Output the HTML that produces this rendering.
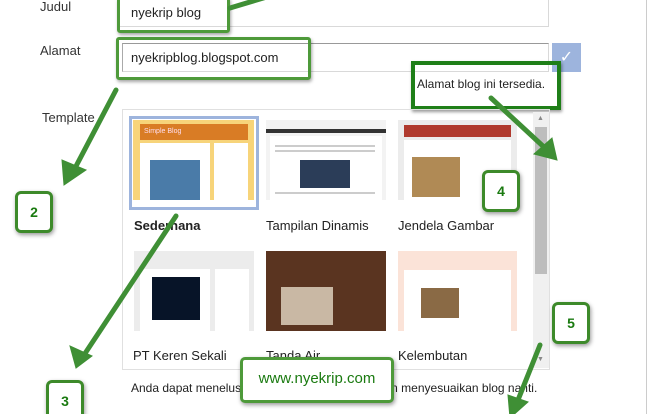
<!DOCTYPE html>
<html><head><meta charset="utf-8"><style>
*{margin:0;padding:0;box-sizing:border-box}
html,body{width:651px;height:414px;overflow:hidden}
body{background:#fff;position:relative;font-family:"Liberation Sans",Arial,sans-serif;color:#222}
.a{position:absolute}
.lbl{font-size:13px;color:#333}
.inp{border:1px solid #d9d9d9;background:#fff}
.gb{border:3px solid #4e9a3a;border-radius:3px;box-shadow:1px 2px 3px rgba(0,0,0,.35)}
.num{background:#fff;border:3px solid #3d8a2a;border-radius:6px;box-shadow:1px 2px 4px rgba(0,0,0,.4);color:#1a7a10;font-weight:bold;font-size:14px;text-align:center;line-height:36px;width:38px;height:42px}
.cap{font-size:13px;color:#222}
.ln{position:absolute;height:2px;background:#ccc}
</style></head><body>
<div class="a lbl" style="left:40px;top:-1px">Judul</div>
<div class="a inp" style="left:118px;top:-2px;width:431px;height:29px"></div>
<div class="a lbl" style="left:40px;top:43px">Alamat</div>
<div class="a inp" style="left:122px;top:43px;width:427px;height:29px;border-top-color:#999;border-left-color:#aaa"></div>
<div class="a" style="left:552px;top:43px;width:29px;height:29px;background:#9db4dd;color:#fff;text-align:center;line-height:29px;font-size:16px">✓</div>
<div class="a gb" style="left:117px;top:-3px;width:113px;height:36px"></div>
<div class="a" style="left:131px;top:5px;font-size:13px;color:#222">nyekrip blog</div>
<div class="a gb" style="left:116px;top:37px;width:195px;height:43px"></div>
<div class="a" style="left:131px;top:50px;font-size:13px;color:#222">nyekripblog.blogspot.com</div>
<div class="a" style="left:411px;top:61px;width:150px;height:49px;border:4px solid #1f7f18;box-shadow:1px 2px 3px rgba(0,0,0,.4)"></div>
<div class="a" style="left:417px;top:77px;font-size:12px;color:#222">Alamat blog ini tersedia.</div>
<div class="a lbl" style="left:42px;top:110px">Template</div>
<div class="a" style="left:122px;top:109px;width:428px;height:261px;border:1px solid #e0e0e0"></div>
<div class="a" style="left:533px;top:112px;width:16px;height:256px;background:#f0f0f0"></div>
<div class="a" style="left:537px;top:115px;font-size:7px;color:#888">▲</div>
<div class="a" style="left:535px;top:127px;width:12px;height:147px;background:#bdbdbd"></div>
<div class="a" style="left:537px;top:356px;font-size:7px;color:#888">▼</div>
<!-- thumbs row1 -->
<div class="a" style="left:129px;top:116px;width:130px;height:94px;border:3px solid #9db4dd"></div>
<div class="a" style="left:133px;top:120px;width:121px;height:80px;background:#f7d47a"></div>
<div class="a" style="left:140px;top:124px;width:108px;height:16px;background:#d97c25;color:#fde;font-size:7px;padding:4px">Simple Blog</div>
<div class="a" style="left:140px;top:143px;width:70px;height:57px;background:#fff"></div>
<div class="a" style="left:214px;top:143px;width:34px;height:57px;background:#fff"></div>
<div class="a" style="left:150px;top:160px;width:50px;height:40px;background:#4a7ba8"></div>
<div class="a" style="left:266px;top:120px;width:120px;height:80px;background:#f3f3f3"></div>
<div class="a" style="left:266px;top:129px;width:120px;height:4px;background:#333"></div>
<div class="a" style="left:270px;top:136px;width:112px;height:64px;background:#fff"></div>
<div class="ln" style="left:275px;top:145px;width:100px"></div>
<div class="ln" style="left:275px;top:150px;width:100px"></div>
<div class="a" style="left:300px;top:160px;width:50px;height:28px;background:#2b3d58"></div>
<div class="ln" style="left:275px;top:192px;width:100px"></div>
<div class="a" style="left:398px;top:120px;width:119px;height:80px;background:#ececec"></div>
<div class="a" style="left:404px;top:125px;width:107px;height:12px;background:#b03a2e"></div>
<div class="a" style="left:404px;top:140px;width:107px;height:60px;background:#fff"></div>
<div class="a" style="left:412px;top:157px;width:48px;height:40px;background:#b08a55"></div>
<div class="a cap" style="left:134px;top:218px;font-weight:bold">Sederhana</div>
<div class="a cap" style="left:266px;top:218px">Tampilan Dinamis</div>
<div class="a cap" style="left:398px;top:218px">Jendela Gambar</div>
<!-- row2 -->
<div class="a" style="left:134px;top:251px;width:120px;height:80px;background:#ececec"></div>
<div class="a" style="left:140px;top:269px;width:70px;height:62px;background:#fff"></div>
<div class="a" style="left:215px;top:269px;width:34px;height:62px;background:#fff"></div>
<div class="a" style="left:152px;top:277px;width:48px;height:43px;background:#071428"></div>
<div class="a" style="left:266px;top:251px;width:120px;height:80px;background:#5a3420"></div>
<div class="a" style="left:281px;top:287px;width:52px;height:38px;background:#c9b8a4"></div>
<div class="a" style="left:398px;top:251px;width:119px;height:80px;background:#fbe3d8"></div>
<div class="a" style="left:404px;top:270px;width:107px;height:61px;background:#fff"></div>
<div class="a" style="left:421px;top:288px;width:38px;height:30px;background:#8a6a45"></div>
<div class="a cap" style="left:133px;top:348px">PT Keren Sekali</div>
<div class="a cap" style="left:266px;top:348px">Tanda Air</div>
<div class="a cap" style="left:398px;top:348px">Kelembutan</div>
<div class="a" style="left:131px;top:381px;font-size:12px;color:#222">Anda dapat menelusuri lebih banyak template dan menyesuaikan blog nanti.</div>
<div class="a" style="left:646px;top:0;width:1px;height:414px;background:#ccc"></div>
<svg class="a" style="left:0;top:0" width="651" height="414">
<g stroke="#3f8f35" stroke-width="5" stroke-linecap="round" fill="#3f8f35">
<line x1="230" y1="8" x2="290" y2="-10"/>
<line x1="116" y1="90" x2="74" y2="170"/><polygon points="64,185 62,160 86,170" stroke-width="1"/>
<line x1="176" y1="216" x2="84" y2="355"/><polygon points="76,368 70,346 92,356" stroke-width="1"/>
<line x1="491" y1="98" x2="545" y2="148"/><polygon points="557,160 534,154 552,138" stroke-width="1"/>
<line x1="540" y1="345" x2="518" y2="400"/><polygon points="510,418 508,395 528,402" stroke-width="1"/>
</g></svg>
<div class="a num" style="left:15px;top:191px">2</div>
<div class="a num" style="left:46px;top:380px">3</div>
<div class="a num" style="left:482px;top:170px">4</div>
<div class="a num" style="left:552px;top:302px">5</div>
<div class="a" style="left:240px;top:357px;width:154px;height:46px;background:#fff;border:3px solid #4e9a3a;border-radius:5px;box-shadow:1px 2px 4px rgba(0,0,0,.4);color:#1a7a10;font-size:15px;text-align:center;line-height:38px">www.nyekrip.com</div>
</body></html>
